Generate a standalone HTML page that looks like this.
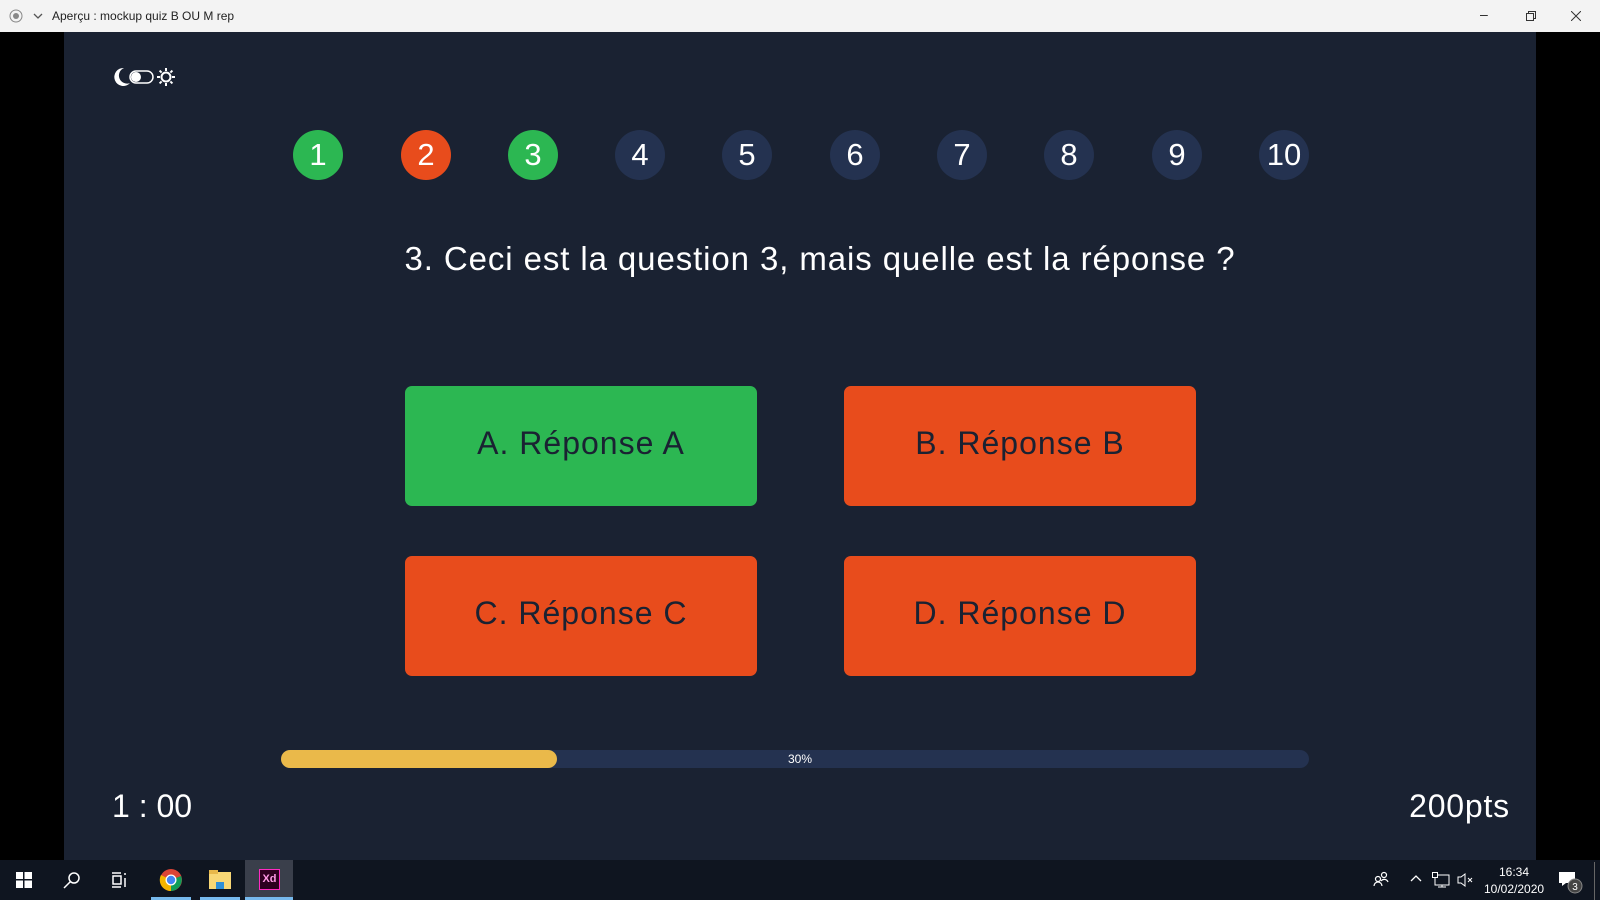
<!DOCTYPE html>
<html><head><meta charset="utf-8"><style>
*{margin:0;padding:0;box-sizing:border-box}
body{width:1600px;height:900px;overflow:hidden;background:#000;font-family:"Liberation Sans",sans-serif;position:relative}
.title{position:absolute;left:0;top:0;width:1600px;height:32px;background:#f3f3f3;font-size:12px;color:#222}
.main{position:absolute;left:64px;top:32px;width:1472px;height:828px;background:#1a2232}
.task{position:absolute;left:0;top:860px;width:1600px;height:40px;background:#0f1520}
.c{position:absolute;top:98px;width:50px;height:50px;border-radius:50%;background:#243250;color:#fff;font-size:31px;text-align:center;line-height:50px}
.btn{position:absolute;width:352px;height:120px;border-radius:7px;color:#1a2232;font-size:32px;letter-spacing:1px;text-align:center;line-height:114px}
.g{background:#2cb752}.o{background:#e84c1c}
</style></head><body>
<div class="title">
<svg style="position:absolute;left:9px;top:9px" width="14" height="14"><circle cx="7" cy="7" r="6" fill="none" stroke="#888"/><circle cx="7" cy="7" r="3" fill="#888"/></svg>
<svg style="position:absolute;left:33px;top:12px" width="10" height="8"><path d="M1 2l4 4 4-4" stroke="#555" fill="none" stroke-width="1.3"/></svg>
<span style="position:absolute;left:52px;top:9px">Aperçu : mockup quiz B OU M rep</span>
<span style="position:absolute;left:1480px;top:6px;font-size:14px">–</span>
<svg style="position:absolute;left:1526px;top:11px" width="10" height="10"><rect x="0.5" y="2.5" width="7" height="7" fill="none" stroke="#333"/><path d="M2.5 2.5V.5h7v7h-2" fill="none" stroke="#333"/></svg>
<svg style="position:absolute;left:1571px;top:11px" width="10" height="10"><path d="M0 0l10 10M10 0L0 10" stroke="#333"/></svg>
</div>
<div class="main">
<svg style="position:absolute;left:48px;top:33px" width="70" height="24">
<path d="M12 3a9 9 0 1 0 6 15A8 8 0 0 1 12 3z" fill="#fff"/>
<rect x="18" y="6" width="23" height="12" rx="6" fill="none" stroke="#fff" stroke-width="1.5"/><circle cx="24" cy="12" r="5" fill="#fff"/>
<g transform="translate(54 12)" stroke="#fff" stroke-width="2"><circle r="4.5" fill="none"/><path d="M0-9v3M0 6v3M-9 0h3M6 0h3M-6.4-6.4l2 2M4.4 4.4l2 2M-6.4 6.4l2-2M4.4-4.4l2-2"/></g>
</svg>
<div class="c" style="left:229px;background:#2cb752">1</div>
<div class="c" style="left:337px;background:#e84c1c">2</div>
<div class="c" style="left:444px;background:#2cb752">3</div>
<div class="c" style="left:551px">4</div>
<div class="c" style="left:658px">5</div>
<div class="c" style="left:766px">6</div>
<div class="c" style="left:873px">7</div>
<div class="c" style="left:980px">8</div>
<div class="c" style="left:1088px">9</div>
<div class="c" style="left:1195px">10</div>
<div style="position:absolute;left:20px;width:1472px;top:208px;text-align:center;color:#fff;font-size:33px;letter-spacing:0.9px">3. Ceci est la question 3, mais quelle est la réponse ?</div>
<div class="btn g" style="left:341px;top:354px">A. Réponse A</div>
<div class="btn o" style="left:780px;top:354px">B. Réponse B</div>
<div class="btn o" style="left:341px;top:524px">C. Réponse C</div>
<div class="btn o" style="left:780px;top:524px">D. Réponse D</div>
<div style="position:absolute;left:217px;top:718px;width:1028px;height:18px;border-radius:9px;background:#243250">
<div style="width:276px;height:18px;border-radius:9px;background:#eab94a"></div>
<div style="position:absolute;left:0;top:0;width:1038px;text-align:center;color:#fff;font-size:12px;line-height:18px">30%</div>
</div>
<div style="position:absolute;left:48px;top:756px;color:#fff;font-size:32px">1 : 00</div>
<div style="position:absolute;right:26px;top:756px;color:#fff;font-size:32px;letter-spacing:0.8px">200pts</div>
</div>
<div class="task">
<svg style="position:absolute;left:16px;top:12px" width="16" height="16" fill="#fff"><rect width="7" height="7"/><rect x="8.5" width="7.5" height="7"/><rect y="8.5" width="7" height="7.5"/><rect x="8.5" y="8.5" width="7.5" height="7.5"/></svg>
<svg style="position:absolute;left:63px;top:11px" width="18" height="18" fill="none" stroke="#fff" stroke-width="1.5"><circle cx="11" cy="7" r="5"/><path d="M7.5 10.5L1 17"/></svg>
<svg style="position:absolute;left:111px;top:12px" width="18" height="16" fill="none" stroke="#fff" stroke-width="1.5"><path d="M1 1h9M1 15h9M2 4h8v8H2zM14 1v2M14 6v9"/></svg>
<svg style="position:absolute;left:159px;top:8px" width="24" height="24"><circle cx="12" cy="12" r="11" fill="#db4437"/><path d="M12 12L22 8A11 11 0 0 1 12 23z" fill="#0f9d58"/><path d="M12 12L2 7A11 11 0 0 0 12 23z" fill="#f4b400"/><circle cx="12" cy="12" r="5.5" fill="#fff"/><circle cx="12" cy="12" r="4.2" fill="#4285f4"/></svg>
<div style="position:absolute;left:151px;top:37px;width:40px;height:3px;background:#76b9ed"></div>
<svg style="position:absolute;left:209px;top:10px" width="22" height="20"><rect y="2" width="22" height="17" fill="#f8d775"/><rect width="9" height="4" fill="#e8b84a"/><path d="M7 12h8v7H7z" fill="#2e8fd8"/></svg>
<div style="position:absolute;left:200px;top:37px;width:40px;height:3px;background:#76b9ed"></div>
<div style="position:absolute;left:245px;top:0;width:48px;height:40px;background:#3a3f4b"></div>
<div style="position:absolute;left:259px;top:9px;width:21px;height:21px;background:#2e001f;border:1.5px solid #ff2bc2;color:#ff9ae6;font-size:11px;font-weight:bold;text-align:center;line-height:18px">Xd</div>
<div style="position:absolute;left:245px;top:37px;width:48px;height:3px;background:#76b9ed"></div>
<svg style="position:absolute;left:1373px;top:11px" width="16" height="16" fill="none" stroke="#fff" stroke-width="1.2"><circle cx="5" cy="8" r="2.5"/><circle cx="11" cy="4" r="2.5"/><path d="M1 15a4 4 0 0 1 8 0M8 10a4 4 0 0 1 7 1"/></svg>
<svg style="position:absolute;left:1410px;top:14px" width="12" height="8" fill="none" stroke="#fff" stroke-width="1.3"><path d="M1 7l5-5 5 5"/></svg>
<svg style="position:absolute;left:1432px;top:12px" width="18" height="16" fill="none" stroke="#fff"><rect x=".5" y=".5" width="5" height="5"/><path d="M5 3h12v10H3V5M10 13v2M6 15h8"/></svg>
<svg style="position:absolute;left:1457px;top:13px" width="16" height="14" fill="none" stroke="#fff"><path d="M1 4h3l4-3v12L4 10H1zM11 5l4 4M15 5l-4 4"/></svg>
<div style="position:absolute;left:1484px;top:4px;width:60px;text-align:center;color:#fff;font-size:12px;line-height:17px">16:34<br>10/02/2020</div>
<svg style="position:absolute;left:1558px;top:10px" width="26" height="24"><path d="M1 2h16v11H8l-4 3v-3H1z" fill="#fff"/><circle cx="17" cy="16" r="7" fill="#444" stroke="#888"/><text x="17" y="20" font-size="10" fill="#fff" text-anchor="middle" font-family="Liberation Sans">3</text></svg>
<div style="position:absolute;left:1594px;top:2px;width:1px;height:38px;background:#666"></div>
</div>
</body></html>
